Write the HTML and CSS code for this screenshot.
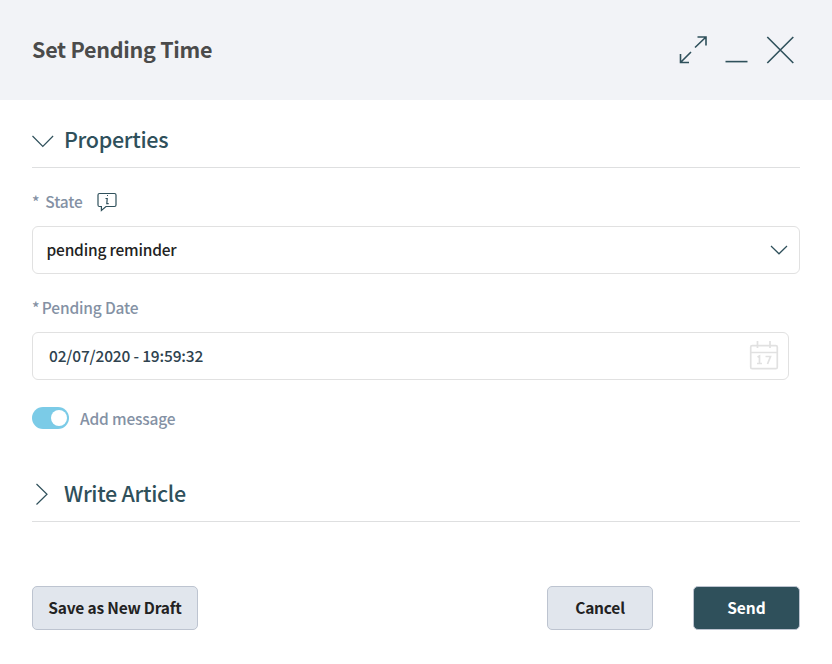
FILE: index.html
```html
<!DOCTYPE html>
<html lang="en">
<head>
<meta charset="utf-8">
<title>Set Pending Time</title>
<link rel="stylesheet" href="styles.css">
</head>
<body>
<main class="dialog">
  <header class="header">
    <h1 class="title">Set Pending Time</h1>
    <div class="controls">
      <button class="icon-button" aria-label="Expand"><svg width="28" height="28" viewBox="0 0 28 28"><path d="M16 11.500 27 1M18.500 1H27V9.500M12 16 1.500 26.500M1.500 18V26.500H10"/></svg></button>
      <button class="icon-button minimize" aria-label="Minimize"><svg width="23" height="28" viewBox="0 0 23 28"><path d="M.5 25.600h22"/></svg></button>
      <button class="icon-button close" aria-label="Close"><svg width="28" height="28" viewBox="0 0 28 28"><path d="m1.300 1 26 26M27.300 1l-26 26"/></svg></button>
    </div>
  </header>
  <div class="content">
    <h2 class="section">
      <svg class="chevron" width="22" height="22" viewBox="0 0 22 22"><path d="m.5 7 10.300 10.300L21.100 7"/></svg>
      <span class="raised">Properties</span>
    </h2>
    <div class="label-row"><span class="star raised">*</span><span class="state-text raised">State</span>
      <svg class="info" width="20" height="20" viewBox="0 0 20 20"><path d="M2.500 1.500h15q1.500 0 1.500 1.500v10q0 1.500-1.500 1.500H9l-4.600 4v-4H2.500Q1 14.500 1 13V3q0-1.500 1.500-1.500Z"/><path d="M8.500 6.500h1.700l-.4 5.200h1.900M10 3.500h1"/></svg>
    </div>
    <div class="field select"><span class="select-text raised">pending reminder</span><svg width="18" height="18" viewBox="0 0 18 18"><path d="m1 5 8 7.800L17 5"/></svg></div>
    <div class="label-row"><span class="star raised">*</span><span class="date-label-text raised">Pending Date</span></div>
    <div class="field date"><span class="date-text raised">02/07/2020 - 19:59:32</span>
      <svg class="calendar" width="30" height="30" viewBox="0 0 30 30"><rect x="1.700" y="4.700" width="26.600" height="23" rx="1.500"/><path d="M2 11.500h26M8.500 0v7M21 0v7"/><path d="m8.500 16 2-1v7M8 22.500h5M16.500 15.500h5l-3 7.500"/></svg>
    </div>
    <div class="toggle-row"><span class="toggle"><span class="knob"></span></span><span class="toggle-text">Add message</span></div>
    <h2 class="section">
      <svg class="chevron" width="22" height="22" viewBox="0 0 22 22"><path d="m4.500 1 10.500 10.300L4.500 21.500"/></svg>
      <span class="raised">Write Article</span>
    </h2>
    <footer class="actions">
      <button class="button draft"><span>Save as New Draft</span></button>
      <button class="button cancel"><span>Cancel</span></button>
      <button class="button send"><span>Send</span></button>
    </footer>
  </div>
</main>
</body>
</html>
```
FILE: styles.css
```css
* { box-sizing: border-box; }
body {
  margin: 0;
  background: #fff;
  color: #222;
  font: 500 15.5px/24px "Noto Sans CJK SC", "Source Sans Pro", sans-serif;
  letter-spacing: -0.17px;
}
h1, h2 { margin: 0; }
svg {
  display: block;
  flex: none;
  fill: none;
  stroke: #2f505b;
  stroke-width: 1.2;
}
.dialog { height: 664px; }
.header {
  display: flex;
  align-items: center;
  justify-content: space-between;
  height: 100px;
  padding: 0 38px 0 32px;
  background: #f2f3f7;
}
.title {
  padding-bottom: 2px;
  color: #4b4b4b;
  font-size: 21.5px;
  line-height: 32px;
  font-weight: 700;
  letter-spacing: -0.28px;
}
.controls { display: flex; }
.icon-button { padding: 0; border: 0; background: none; }
.icon-button svg { stroke-width: 1.6; }
.minimize { margin-left: 18px; }
.close { margin-left: 18px; }
.content { padding: 12px 32px 0; }
.raised { padding-bottom: 2px; }
.section {
  display: flex;
  align-items: center;
  gap: 10px;
  height: 56px;
  border-bottom: 1px solid #dedfe0;
  color: #2f505b;
  font-size: 21.5px;
  line-height: 32px;
  font-weight: 500;
  letter-spacing: -0.32px;
}
.label-row { display: flex; align-items: center; height: 24px; margin-top: 22px; color: #8491a4; }
.state-text { margin-left: 6px; }
.info { margin-left: 14.5px; }
.date-label-text { margin-left: 2.5px; }
.field {
  display: flex;
  align-items: center;
  justify-content: space-between;
  height: 48px;
  margin-top: 12px;
  border: 1px solid #e1e1e1;
  border-radius: 6px;
}
.select { padding: 0 11px 0 13.5px; }
.select-text { letter-spacing: -0.2px; }
.date { width: 757px; padding: 0 9px 0 16px; }
.date-text { color: #2e424e; letter-spacing: -0.16px; }
.calendar { stroke: #e1e1e1; stroke-width: 1.7; }
.toggle-row { display: flex; align-items: center; height: 24px; margin-top: 26px; color: #8491a4; }
.toggle {
  display: flex;
  justify-content: flex-end;
  width: 37px;
  height: 22px;
  padding: 3px 2px;
  border-radius: 11px;
  background: #7bcbe7;
}
.knob { width: 16px; height: 16px; border-radius: 50%; background: #fff; }
.toggle-text { margin-left: 11px; }
.toggle-row + .section { margin-top: 36px; }
.actions { display: flex; margin-top: 64px; }
.button {
  height: 44px;
  padding: 0 0 2px;
  border: 1px solid #bdc4d0;
  border-radius: 5px;
  background: #e1e6ed;
  color: #222;
  font: 700 15.5px/24px "Noto Sans CJK SC", "Source Sans Pro", sans-serif;
  letter-spacing: -0.2px;
}
.draft { width: 166px; margin-right: auto; }
.cancel { width: 106px; margin-right: 40px; }
.send { width: 107px; background: #2f505b; color: #fff; letter-spacing: 0; }
```
